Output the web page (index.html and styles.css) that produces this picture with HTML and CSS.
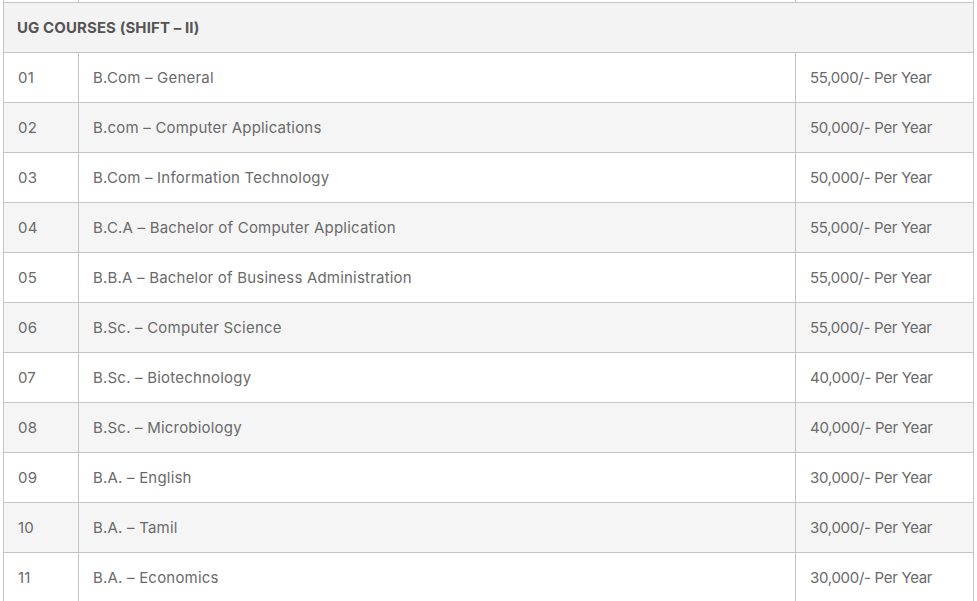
FILE: index.html
```html
<!DOCTYPE html>
<html lang="en">
<head>
<meta charset="utf-8">
<title>UG Courses (Shift – II)</title>
<link rel="stylesheet" href="styles.css">
</head>
<body>
<div class="wrap">
<table class="fees">
  <colgroup>
    <col class="c-no">
    <col class="c-name">
    <col class="c-fee">
  </colgroup>
  <tbody>
    <tr class="prev"><td></td><td></td><td></td></tr>
    <tr class="head"><td colspan="3">UG COURSES (SHIFT – II)</td></tr>
    <tr><td>01</td><td>B.Com – General</td><td class="fee">55,000/- Per Year</td></tr>
    <tr class="alt"><td>02</td><td>B.com – Computer Applications</td><td class="fee">50,000/- Per Year</td></tr>
    <tr><td>03</td><td>B.Com – Information Technology</td><td class="fee">50,000/- Per Year</td></tr>
    <tr class="alt"><td>04</td><td>B.C.A – Bachelor of Computer Application</td><td class="fee">55,000/- Per Year</td></tr>
    <tr><td>05</td><td>B.B.A – Bachelor of Business Administration</td><td class="fee">55,000/- Per Year</td></tr>
    <tr class="alt"><td>06</td><td>B.Sc. – Computer Science</td><td class="fee">55,000/- Per Year</td></tr>
    <tr><td>07</td><td>B.Sc. – Biotechnology</td><td class="fee">40,000/- Per Year</td></tr>
    <tr class="alt"><td>08</td><td>B.Sc. – Microbiology</td><td class="fee">40,000/- Per Year</td></tr>
    <tr><td>09</td><td>B.A. – English</td><td class="fee">30,000/- Per Year</td></tr>
    <tr class="alt"><td>10</td><td>B.A. – Tamil</td><td class="fee">30,000/- Per Year</td></tr>
    <tr><td>11</td><td>B.A. – Economics</td><td class="fee">30,000/- Per Year</td></tr>
  </tbody>
</table>
</div>
</body>
</html>
```
FILE: styles.css
```css
html, body {
  margin: 0;
  padding: 0;
  background: #ffffff;
  overflow: hidden;
}
.wrap {
  padding-left: 3px;
  height: 601px;
  overflow: hidden;
}
.fees {
  border-collapse: collapse;
  table-layout: fixed;
  width: 970px;
  margin-top: -48px;
  font-family: Inter, "Noto Sans", sans-serif;
  font-size: 15px;
  letter-spacing: 0.2px;
  color: #6a6a6a;
}
.c-no { width: 75px; }
.c-name { width: 717px; }
.c-fee { width: 178px; }
.fees td {
  border: 1px solid #c4c4c4;
  height: 49px;
  padding: 0 0 0 14px;
  vertical-align: middle;
  white-space: nowrap;
}
.fees td.fee {
  letter-spacing: -0.3px;
}
.fees .head td {
  background: #f3f3f3;
  font-weight: 700;
  letter-spacing: 0.1px;
  color: #555555;
  padding-left: 13px;
}
.fees .alt td {
  background: #f5f5f5;
}
```
